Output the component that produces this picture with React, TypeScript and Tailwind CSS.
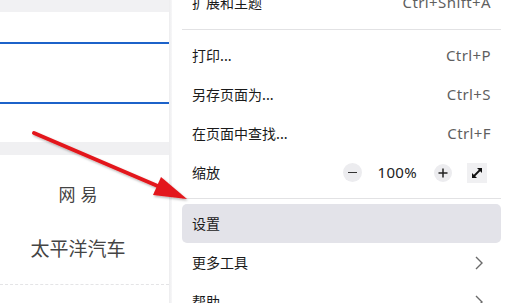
import { ReactNode } from 'react';

const cjk = { fontFamily: '"Noto Sans CJK SC", "Noto Sans", sans-serif' };
const latin = { fontFamily: '"Noto Sans", "Liberation Sans", sans-serif' };

function Row({ label, right, active }: { label: string; right?: ReactNode; active?: boolean }) {
  return (
    <div
      className={`h-[39px] shrink-0 flex items-center justify-between pl-[10px] pr-[10px] rounded-[5px] ${
        active ? 'bg-[#e3e3e9]' : ''
      }`}
    >
      <span className="text-[14px] text-[#1a1a1a]" style={cjk}>
        {label}
      </span>
      {right}
    </div>
  );
}

function Shortcut({ keys }: { keys: string }) {
  return (
    <span className="text-[15px] text-[#5f5f5f] tracking-[0.4px]" style={latin}>
      {keys}
    </span>
  );
}

function Chevron() {
  return (
    <svg width="12" height="16" viewBox="0 0 12 16" className="mr-[6px]">
      <path d="M3 2 L9 8 L3 14" fill="none" stroke="#6a6a6a" strokeWidth="1.4" />
    </svg>
  );
}

function ZoomControls() {
  return (
    <div className="flex items-center text-[#222] mr-[4px]">
      <div className="w-[19px] h-[19px] rounded-full bg-[#ececef] flex items-center justify-center">
        <div className="w-[9px] h-[1.5px] bg-[#333]" />
      </div>
      <span className="ml-[16px] mr-[17px] text-[15px] tracking-[0.3px]" style={latin}>
        100%
      </span>
      <div className="w-[18px] h-[18px] rounded-full bg-[#ececef] flex items-center justify-center">
        <svg width="10" height="10" viewBox="0 0 10 10">
          <path d="M5 0.5 V9.5 M0.5 5 H9.5" stroke="#222" strokeWidth="1.5" />
        </svg>
      </div>
      <div className="ml-[15px] w-[20px] h-[20px] bg-[#f0f0f2] flex items-center justify-center">
        <svg width="14" height="14" viewBox="0 0 14 14">
          <path d="M3 11 L11 3" stroke="#111" strokeWidth="1.8" />
          <path d="M7 2 H12 V7 Z" fill="#111" />
          <path d="M2 7 V12 H7 Z" fill="#111" />
        </svg>
      </div>
    </div>
  );
}

function Separator({ top, bottom }: { top: string; bottom: string }) {
  return <div className={`h-px bg-[#e2e2e4] shrink-0 ${top} ${bottom}`} />;
}

export default function App() {
  return (
    <div className="relative w-[511px] h-[303px] overflow-hidden flex bg-white">
      {/* page behind the menu */}
      <div className="w-[169px] shrink-0 flex flex-col bg-white">
        <div className="h-[12px] bg-[#f1f1f3]" />
        <div className="h-[30px]" />
        <div className="h-[2px] bg-[#1c62c9]" />
        <div className="h-[58px]" />
        <div className="h-[2px] bg-[#1c62c9]" />
        <div className="h-[38px]" />
        <div className="h-[13px] bg-[#f0f0f2]" />
        <div className="flex flex-col items-center pr-[13px] text-[#444]" style={cjk}>
          <div className="mt-[26px] text-[17px] tracking-[5px] pl-[5px]">网易</div>
          <div className="mt-[27px] text-[19px]">太平洋汽车</div>
        </div>
        <div className="mt-[22px] border-t border-dashed border-[#e4e4e6]" />
      </div>
      <div className="w-[3px] shrink-0 bg-gradient-to-r from-[#ececee] to-[#f7f7f8]" />

      {/* browser menu */}
      <div className="flex-1 flex flex-col px-[10px] mt-[-17px]">
        <Row label="扩展和主题" right={<Shortcut keys="Ctrl+Shift+A" />} />
        <Separator top="mt-[7px]" bottom="mb-[6px]" />
        <Row label="打印..." right={<Shortcut keys="Ctrl+P" />} />
        <Row label="另存页面为..." right={<Shortcut keys="Ctrl+S" />} />
        <Row label="在页面中查找..." right={<Shortcut keys="Ctrl+F" />} />
        <Row label="缩放" right={<ZoomControls />} />
        <Separator top="mt-[6px]" bottom="mb-[5px]" />
        <Row label="设置" active />
        <Row label="更多工具" right={<Chevron />} />
        <Row label="帮助" right={<Chevron />} />
      </div>

      {/* red annotation arrow */}
      <svg className="absolute left-0 top-0 pointer-events-none" width="511" height="303">
        <defs>
          <filter id="sh" x="-10%" y="-10%" width="120%" height="120%">
            <feDropShadow dx="1" dy="1.5" stdDeviation="1.2" floodColor="#000" floodOpacity="0.3" />
          </filter>
        </defs>
        <g filter="url(#sh)">
          <path d="M34 133 L160 187" stroke="#e3191b" strokeWidth="4" strokeLinecap="round" />
          <path d="M187 199 L153 195 L161 177 Z" fill="#e3191b" />
        </g>
      </svg>
    </div>
  );
}
